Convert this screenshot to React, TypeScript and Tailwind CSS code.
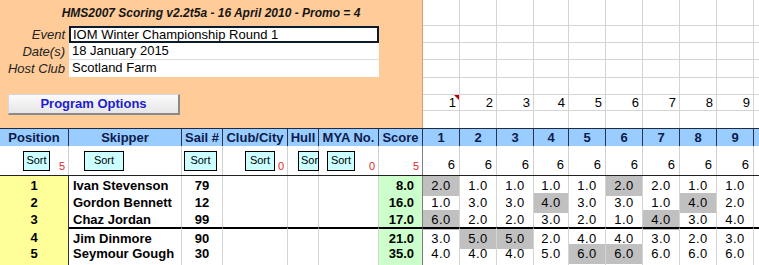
import React from 'react';

const COLS =
  'grid grid-cols-[69px_113px_41px_65px_31px_60px_44px_37px_37px_37px_35px_37px_37px_37px_37px_37px_37px]';

const RACE_COLS = [37, 37, 37, 35, 37, 37, 37, 37, 37, 37];
const TOP_ROWS = [26, 17, 17, 18, 17, 16, 17];

type Row = {
  pos: number;
  name: string;
  sail: string;
  score: string;
  races: string[];
  discards: number[];
};

const rows: Row[] = [
  { pos: 1, name: 'Ivan Stevenson', sail: '79', score: '8.0', races: ['2.0', '1.0', '1.0', '1.0', '1.0', '2.0', '2.0', '1.0', '1.0'], discards: [0, 5] },
  { pos: 2, name: 'Gordon Bennett', sail: '12', score: '16.0', races: ['1.0', '3.0', '3.0', '4.0', '3.0', '3.0', '1.0', '4.0', '2.0'], discards: [3, 7] },
  { pos: 3, name: 'Chaz Jordan', sail: '99', score: '17.0', races: ['6.0', '2.0', '2.0', '3.0', '2.0', '1.0', '4.0', '3.0', '4.0'], discards: [0, 6] },
  { pos: 4, name: 'Jim Dinmore', sail: '90', score: '21.0', races: ['3.0', '5.0', '5.0', '2.0', '4.0', '4.0', '3.0', '2.0', '3.0'], discards: [1, 2] },
  { pos: 5, name: 'Seymour Gough', sail: '30', score: '35.0', races: ['4.0', '4.0', '4.0', '5.0', '6.0', '6.0', '6.0', '6.0', '6.0'], discards: [4, 5] },
];

const headers = ['Position', 'Skipper', 'Sail #', 'Club/City', 'Hull', 'MYA No.', 'Score', '1', '2', '3', '4', '5', '6', '7', '8', '9', ''];

function SortButton({ width, label = 'Sort', left }: { width: string; label?: string; left?: boolean }) {
  return (
    <div
      className={`${width} h-[20px] shrink-0 bg-[#ccffff] border border-black text-[11px] leading-none flex items-center whitespace-nowrap ${
        left ? 'justify-start pl-[2px]' : 'justify-center'
      }`}
    >
      {label}
    </div>
  );
}

function Count({ value }: { value: string }) {
  return <span className="ml-auto self-end pb-[3px] pr-[3px] text-[11px] leading-none text-[#e8262a]">{value}</span>;
}

export default function App() {
  return (
    <div className="w-[759px] h-[265px] overflow-hidden bg-white font-['Liberation_Sans',Arial,sans-serif] text-black">
      {/* top area */}
      <div className="flex h-[128px]">
        <div className="w-[423px] shrink-0 bg-[#ffcc99] border-r border-[#d9a06a] flex flex-col">
          <div className="h-[26px] flex items-center justify-center text-[12px] font-bold italic text-[#151515]">
            HMS2007 Scoring v2.2t5a - 16 April 2010 - Promo = 4
          </div>
          <div className="flex">
            <div className="w-[69px] flex flex-col text-right italic text-[13px] text-[#222] pr-[4px]">
              <div className="h-[17px] leading-[17px]">Event</div>
              <div className="h-[17px] leading-[17px]">Date(s)</div>
              <div className="h-[17px] leading-[17px]">Host Club</div>
            </div>
            <div className="w-[310px] flex flex-col text-[13px]">
              <div className="h-[17px] border-2 border-[#0d1a2c] bg-white pl-[2px] leading-[13px]">
                IOM Winter Championship Round 1
              </div>
              <div className="h-[17px] bg-white border-b border-[#dcdcdc] pl-[3px] leading-[16px]">18 January 2015</div>
              <div className="h-[17px] bg-white pl-[3px] leading-[16px]">Scotland Farm</div>
            </div>
          </div>
          <div className="mt-[17px] ml-[8px] w-[172px] h-[21px] bg-gradient-to-b from-[#fbfbfb] to-[#e6e6e6] border border-[#d8d8d8] border-r-2 border-b-2 border-r-[#8a8a8a] border-b-[#8a8a8a] flex items-center justify-center text-[13px] font-bold text-[#1c1ccf]">
            Program Options
          </div>
        </div>
        <div className="flex flex-col">
          {TOP_ROWS.map((h, r) => (
            <div key={r} className="flex" style={{ height: h }}>
              {RACE_COLS.map((w, c) => (
                <div
                  key={c}
                  className={`relative h-full shrink-0 border-r border-[#d4d4d4] ${r < TOP_ROWS.length - 1 ? 'border-b' : ''} flex items-end justify-end pr-[3px] text-[13px] leading-[15px]`}
                  style={{ width: w }}
                >
                  {r === 5 && c < 9 ? c + 1 : ''}
                  {r === 5 && c === 0 && (
                    <span className="absolute top-0 right-0 w-0 h-0 border-l-[5px] border-l-transparent border-t-[5px] border-t-[#c00000]" />
                  )}
                </div>
              ))}
            </div>
          ))}
        </div>
      </div>

      {/* header row */}
      <div className={`${COLS} h-[18px] bg-[#99ccff] border-t border-[#1e2a44]`}>
        {headers.map((h, i) => (
          <div
            key={i}
            className="border-r border-[#2a3450] flex items-center justify-center text-[13px] font-bold text-[#0d1b4b] whitespace-nowrap overflow-hidden"
          >
            {h}
          </div>
        ))}
      </div>

      {/* sort row */}
      <div className={`${COLS} h-[30px] border-b border-[#222]`}>
        <div className="flex items-center border-r border-[#d0d0d0]">
          <div className="ml-[23px]">
            <SortButton width="w-[27px]" />
          </div>
          <Count value="5" />
        </div>
        <div className="flex items-center border-r border-[#d0d0d0]">
          <div className="ml-[15px]">
            <SortButton width="w-[40px]" />
          </div>
        </div>
        <div className="flex items-center border-r border-[#d0d0d0]">
          <div className="ml-[2px]">
            <SortButton width="w-[33px]" />
          </div>
        </div>
        <div className="flex items-center border-r border-[#d0d0d0]">
          <div className="ml-[22px]">
            <SortButton width="w-[30px]" />
          </div>
          <Count value="0" />
        </div>
        <div className="flex items-center border-r border-[#d0d0d0]">
          <div className="ml-[10px]">
            <SortButton width="w-[21px]" label="Sor" left />
          </div>
        </div>
        <div className="flex items-center border-r border-[#d0d0d0]">
          <div className="ml-[8px]">
            <SortButton width="w-[28px]" />
          </div>
          <Count value="0" />
        </div>
        <div className="flex items-center border-r border-[#808080]">
          <Count value="5" />
        </div>
        {Array.from({ length: 10 }).map((_, i) => (
          <div key={i} className="flex items-end justify-end border-r border-[#d0d0d0] pr-[4px] pb-[4px] text-[13px] leading-none">
            {i < 9 ? '6' : ''}
          </div>
        ))}
      </div>

      {/* data rows */}
      {rows.map((row, r) => {
        const top = r === 3 ? 'border-t-2 border-t-black' : '';
        return (
          <div key={row.pos} className={`${COLS} h-[17px] text-[13px]`}>
            <div className="bg-[#ffff99] border-r border-[#333] flex items-center justify-center font-bold">{row.pos}</div>
            <div className={`${top} border-r border-[#d4d4d4] flex items-center pl-[4px] font-bold whitespace-nowrap`}>{row.name}</div>
            <div className={`${top} border-r border-[#d4d4d4] flex items-center justify-center font-bold`}>{row.sail}</div>
            <div className={`${top} border-r border-[#d4d4d4]`} />
            <div className={`${top} border-r border-[#d4d4d4]`} />
            <div className={`${top} border-r border-[#d4d4d4]`} />
            <div className={`${top} bg-[#ccffcc] border-r border-[#808080] flex items-center justify-end pr-[8px] font-bold`}>{row.score}</div>
            {row.races.map((v, c) => (
              <div
                key={c}
                className={`${top} ${row.discards.includes(c) ? 'bg-[#c0c0c0]' : ''} border-r border-[#d4d4d4] flex items-center justify-center tracking-[0.5px]`}
              >
                {v}
              </div>
            ))}
            <div className={`${top} border-r border-[#d4d4d4]`} />
          </div>
        );
      })}
      <div className={`${COLS} h-[17px]`}>
        <div className="bg-[#ffff99] border-r border-[#333]" />
        <div className="border-r border-[#d4d4d4]" />
        <div className="border-r border-[#d4d4d4]" />
        <div className="border-r border-[#d4d4d4]" />
        <div className="border-r border-[#d4d4d4]" />
        <div className="border-r border-[#d4d4d4]" />
        <div className="bg-[#ccffcc] border-r border-[#808080]" />
        {Array.from({ length: 10 }).map((_, i) => (
          <div key={i} className="border-r border-[#d4d4d4]" />
        ))}
      </div>
    </div>
  );
}
